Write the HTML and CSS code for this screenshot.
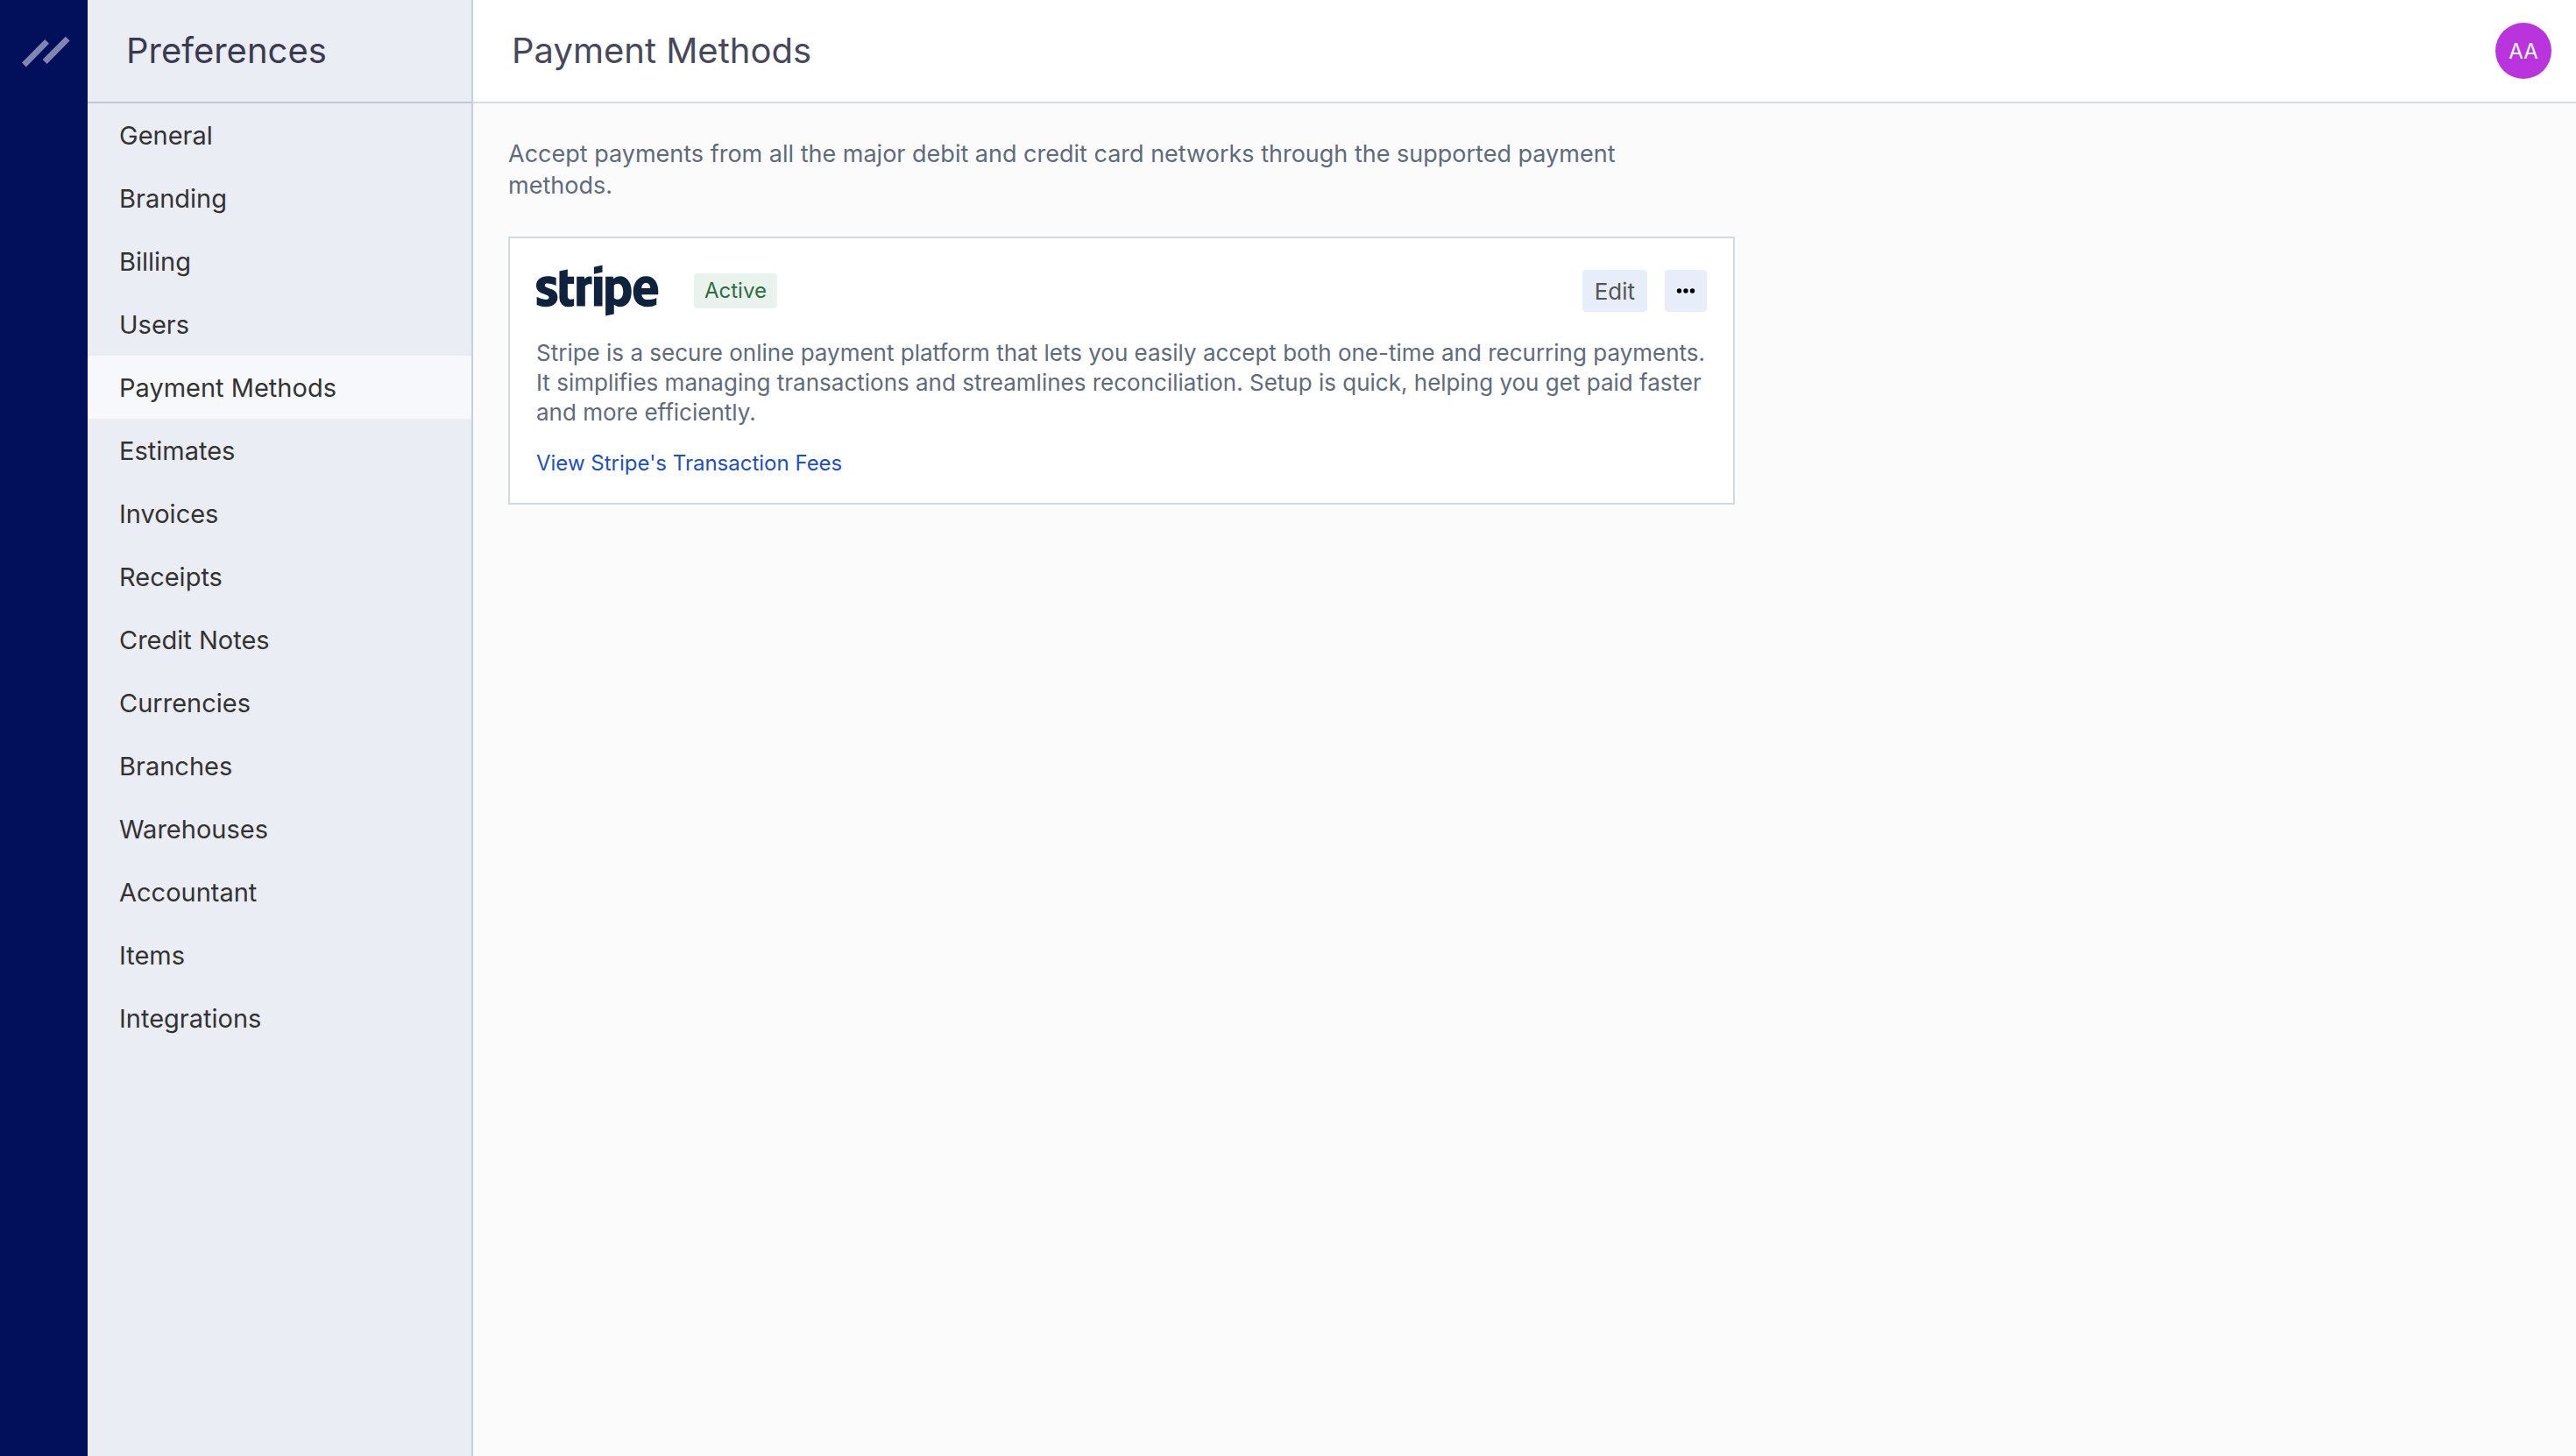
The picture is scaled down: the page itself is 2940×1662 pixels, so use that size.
FILE: index.html
```html
<!DOCTYPE html>
<html lang="en">
<head>
  <meta charset="utf-8">
  <title>Payment Methods</title>
  <link rel="stylesheet" href="styles.css">
</head>
<body>
  <div class="app">
    <div class="rail">
      <a class="rail-logo" href="#" aria-label="Home">
        <svg width="56" height="36" viewBox="0 0 56 36" fill="#8186b0" aria-hidden="true">
          <path d="M0 30.500 26.200 4 31 8.800 4.800 35.500z"/>
          <path d="M23.600 27 49.800 0.700 54.600 5.400 28.600 32z"/>
        </svg>
      </a>
    </div>
    <aside class="sidebar">
      <h2 class="sidebar-title">Preferences</h2>
      <nav class="menu">
        <a class="menu-item" href="#">General</a>
        <a class="menu-item" href="#">Branding</a>
        <a class="menu-item" href="#">Billing</a>
        <a class="menu-item" href="#">Users</a>
        <a class="menu-item is-active" href="#" aria-current="page">Payment Methods</a>
        <a class="menu-item" href="#">Estimates</a>
        <a class="menu-item" href="#">Invoices</a>
        <a class="menu-item" href="#">Receipts</a>
        <a class="menu-item" href="#">Credit Notes</a>
        <a class="menu-item" href="#">Currencies</a>
        <a class="menu-item" href="#">Branches</a>
        <a class="menu-item" href="#">Warehouses</a>
        <a class="menu-item" href="#">Accountant</a>
        <a class="menu-item" href="#">Items</a>
        <a class="menu-item" href="#">Integrations</a>
      </nav>
    </aside>
    <main class="main">
      <header class="topbar">
        <h1 class="topbar-title">Payment Methods</h1>
        <button class="avatar" type="button">AA</button>
      </header>
      <div class="content">
        <p class="intro">Accept payments from all the major debit and credit card networks through the supported payment methods.</p>
        <section class="card">
          <div class="card-head">
            <svg class="stripe" viewBox="0 0 60 25" role="img" aria-label="Stripe">
              <path fill="#0f223e" fill-rule="evenodd" d="M59.64 14.28h-8.06c.19 1.93 1.6 2.55 3.2 2.55 1.64 0 2.96-.37 4.05-.95v3.32a8.33 8.33 0 0 1-4.56 1.1c-4.01 0-6.83-2.5-6.83-7.48 0-4.19 2.39-7.52 6.3-7.52 3.92 0 5.96 3.28 5.96 7.5 0 .4-.04 1.26-.06 1.48zm-5.92-5.62c-1.03 0-2.17.73-2.17 2.58h4.25c0-1.85-1.07-2.58-2.08-2.58zM40.95 20.3c-1.44 0-2.32-.6-2.9-1.04l-.02 4.63-4.12.87V5.57h3.76l.08 1.02a4.7 4.7 0 0 1 3.23-1.29c2.9 0 5.62 2.6 5.62 7.4 0 5.23-2.7 7.6-5.65 7.6zM40 8.95c-.95 0-1.54.34-1.97.81l.02 6.12c.4.44.98.78 1.95.78 1.52 0 2.54-1.65 2.54-3.87 0-2.15-1.04-3.84-2.54-3.84zM28.24 5.57h4.13v14.44h-4.13V5.57zm0-4.7L32.37 0v3.36l-4.13.88V.88zm-4.32 9.35v9.79H19.8V5.57h3.7l.12 1.22c1-1.77 3.07-1.41 3.62-1.22v3.79c-.52-.17-2.29-.43-3.32.86zm-8.55 4.72c0 2.43 2.6 1.68 3.12 1.46v3.36c-.55.3-1.54.54-2.89.54a4.15 4.15 0 0 1-4.27-4.24l.01-13.17 4.02-.86v3.54h3.14V9.1h-3.13v5.85zm-4.91.7c0 2.97-2.31 4.66-5.73 4.66a11.2 11.2 0 0 1-4.46-.93v-3.93c1.38.75 3.1 1.31 4.46 1.31.92 0 1.53-.24 1.53-1C6.26 13.77 0 14.51 0 9.95 0 7.04 2.28 5.3 5.62 5.3c1.36 0 2.72.2 4.09.75v3.88a9.23 9.23 0 0 0-4.1-1.06c-.86 0-1.44.25-1.44.9 0 1.85 6.29.97 6.29 5.88z"/>
            </svg>
            <span class="tag">Active</span>
            <div class="actions">
              <button class="btn" type="button">Edit</button>
              <button class="btn btn-icon" type="button" aria-label="More">
                <svg width="22" height="6" viewBox="0 0 22 6" aria-hidden="true">
                  <circle cx="3.500" cy="3" r="2.700"/><circle cx="11" cy="3" r="2.700"/><circle cx="18.500" cy="3" r="2.700"/>
                </svg>
              </button>
            </div>
          </div>
          <p class="card-text">Stripe is a secure online payment platform that lets you easily accept both one-time and recurring payments. It simplifies managing transactions and streamlines reconciliation. Setup is quick, helping you get paid faster and more efficiently.</p>
          <a class="card-link" href="#">View Stripe's Transaction Fees</a>
        </section>
      </div>
    </main>
  </div>
</body>
</html>
```
FILE: styles.css
```css
* {
  box-sizing: border-box;
}

body {
  margin: 0;
  font-family: Inter, "Liberation Sans", sans-serif;
  background: #fbfbfb;
}

h1, h2, p {
  margin: 0;
}

a {
  text-decoration: none;
}

button {
  border: 0;
  font-family: inherit;
  cursor: pointer;
}

.app {
  display: flex;
  min-height: 100vh;
}

.rail {
  flex: 0 0 100px;
  background: #020f5a;
}

.rail-logo {
  display: flex;
  padding: 41px 0 0 25px;
}

.sidebar {
  flex: 0 0 440px;
  background: #ebedf5;
  border-right: 2px solid #c6d0da;
}

.sidebar-title,
.topbar {
  height: 118px;
  display: flex;
  align-items: center;
}

.sidebar-title,
.topbar-title {
  font-size: 40px;
  line-height: 52px;
  font-weight: 400;
}

.sidebar-title {
  padding-left: 44px;
  color: #3b3b4f;
  border-bottom: 2px solid #bec8d2;
}

.menu {
  display: flex;
  flex-direction: column;
}

.menu-item {
  padding: 19px 36px 17px;
  font-size: 29px;
  line-height: 36px;
  color: #333;
}

.menu-item.is-active {
  background: #f7f8fc;
  border-radius: 4px;
}

.main {
  flex: 1;
  min-width: 0;
}

.topbar {
  justify-content: space-between;
  padding: 0 28px 0 44px;
  background: #fff;
  border-bottom: 2px solid #d2dde2;
}

.topbar-title {
  color: #48485c;
}

.avatar {
  width: 64px;
  height: 64px;
  padding: 0;
  border-radius: 50%;
  background: #b934dd;
  color: #fff;
  font-size: 24px;
}

.content {
  max-width: 1480px;
  padding: 40px;
}

.intro {
  max-width: 1320px;
  margin-bottom: 40px;
  font-size: 27px;
  line-height: 36px;
  color: #5f6b7c;
}

.card {
  padding: 30px;
  background: #fff;
  border: 2px solid #d3dbe2;
}

.card-head {
  display: flex;
  align-items: center;
  margin-bottom: 24px;
}

.stripe {
  width: 140px;
  height: 60px;
}

.tag {
  margin-left: 40px;
  padding: 4px 12px;
  border-radius: 4px;
  background: #eaf2ed;
  color: #2f6d42;
  font-size: 24px;
  line-height: 32px;
}

.actions {
  display: flex;
  gap: 20px;
  margin-left: auto;
}

.btn {
  height: 48px;
  padding: 0 14px;
  border-radius: 4px;
  background: #e7edf9;
  color: #555;
  font-size: 26px;
}

.btn-icon {
  display: flex;
  align-items: center;
  justify-content: center;
  width: 48px;
  padding: 0;
  color: #000;
}

.card-text {
  margin-bottom: 26px;
  font-size: 26px;
  line-height: 34px;
  color: #5f6b7c;
}

.card-link {
  display: block;
  font-size: 24px;
  line-height: 30px;
  color: #1d4fc4;
}
```
